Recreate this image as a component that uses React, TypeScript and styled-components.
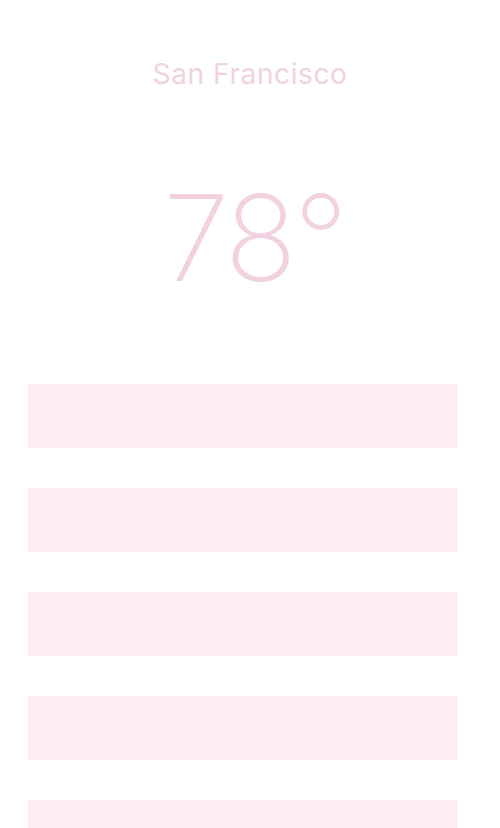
import React from "react";
import styled, { createGlobalStyle } from "styled-components";

const Global = createGlobalStyle`
  html, body { margin: 0; padding: 0; background: #ffffff; }
  body { font-family: Inter, "Open Sans", sans-serif; }
`;

const Page = styled.div`
  width: 500px;
  height: 828px;
  overflow: hidden;
  display: flex;
  flex-direction: column;
  align-items: stretch;
`;

const City = styled.h1`
  margin: 56px 0 0;
  text-align: center;
  font-family: Inter, sans-serif;
  font-weight: 400;
  font-size: 28px;
  line-height: 36px;
  color: #f2d2e0;
  letter-spacing: 0.6px;
`;

const Temp = styled.div`
  margin-top: 78px;
  text-align: center;
  font-family: Inter, sans-serif;
  font-weight: 200;
  font-size: 120px;
  line-height: 136px;
  color: #f2d2e0;
  letter-spacing: -3px;
  padding-left: 8px;
`;

const List = styled.div`
  margin: 78px 42px 0 28px;
  display: flex;
  flex-direction: column;
  gap: 40px;
`;

const Row = styled.div`
  height: 64px;
  background: #fdeef4;
  flex-shrink: 0;
`;

export default function App() {
  return (
    <Page>
      <Global />
      <City>San Francisco</City>
      <Temp>78°</Temp>
      <List>
        {[0, 1, 2, 3, 4].map((i) => (
          <Row key={i} />
        ))}
      </List>
    </Page>
  );
}
